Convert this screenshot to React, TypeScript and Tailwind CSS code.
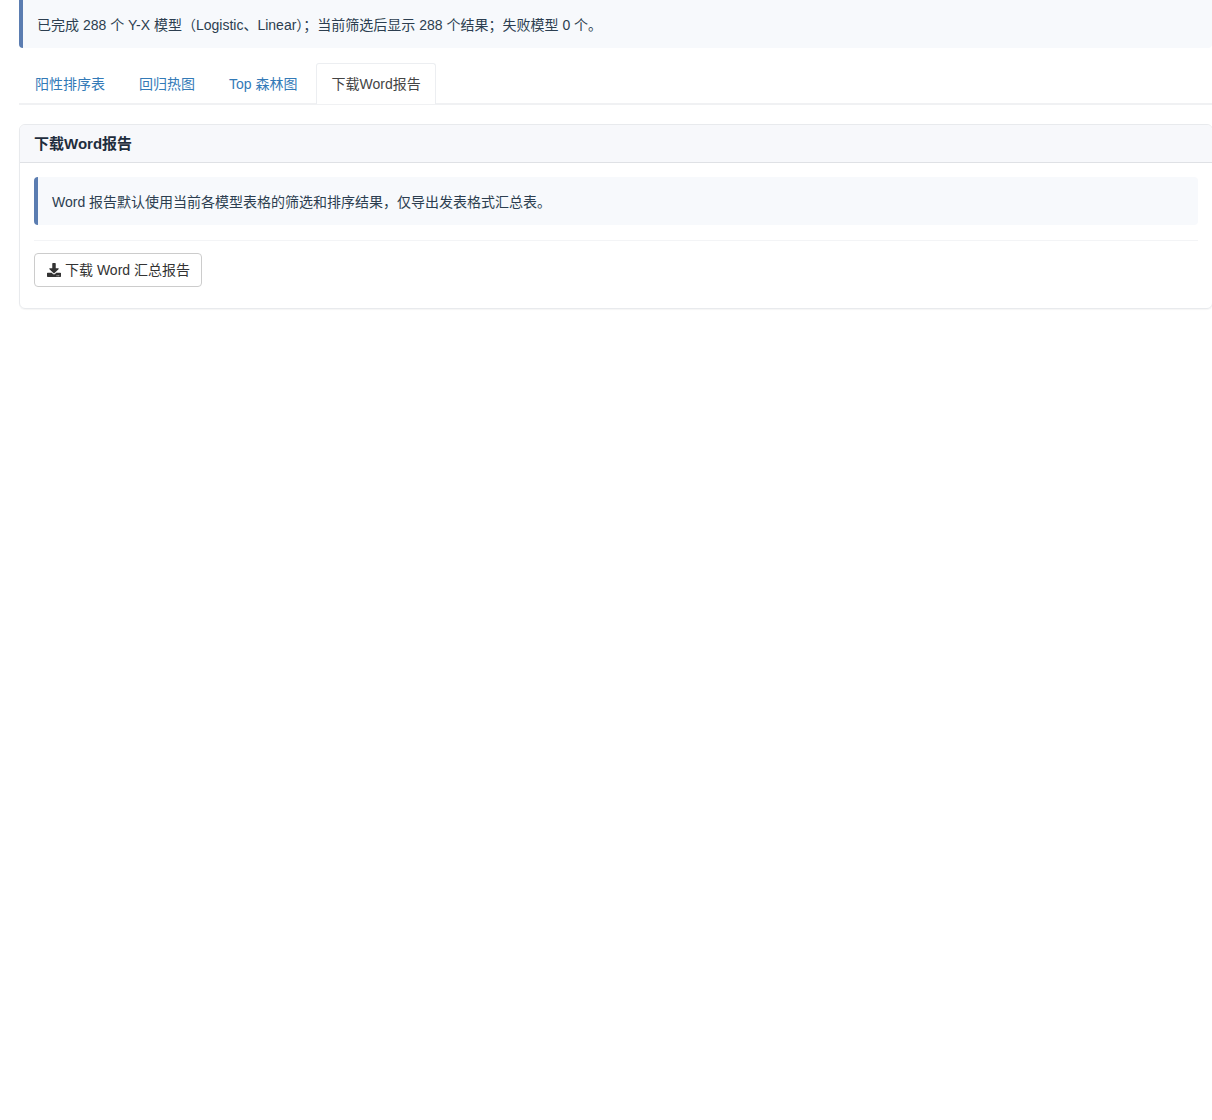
import { FaDownload } from "react-icons/fa";

const tabs = ["阳性排序表", "回归热图", "Top 森林图"];

export default function App() {
  return (
    <div className="min-h-[1120px] overflow-x-hidden bg-white pl-[19px] text-[14px] leading-[20px] text-[#333] font-['Liberation_Sans','Noto_Sans_CJK_SC',sans-serif]">
      <div className="h-[48px] rounded-b-[4px] border-l-[4px] border-[#5b7db1] bg-[#f7f9fc] pl-[14px] pt-[15px] text-[#2c3e50]">
        已完成 288 个 Y-X 模型（Logistic、Linear）；当前筛选后显示 288 个结果；失败模型 0 个。
      </div>

      <div className="mt-[15px] flex h-[42px] border-b-2 border-[#f0f1f3]">
        {tabs.map((tab) => (
          <a key={tab} className="mr-[2px] flex h-[41px] items-center px-[16px] text-[#337ab7]">
            {tab}
          </a>
        ))}
        <a className="relative ml-[1px] flex h-[41px] items-center rounded-t-[3px] border border-b-0 border-[#eceef1] bg-white px-[14px] text-[#444]">
          下载Word报告
        </a>
      </div>

      <div className="mt-[19px] h-[185px] w-[1194px] overflow-hidden rounded-[6px] border border-[#e8eaed] shadow-[0_1px_1px_rgba(0,0,0,0.04)]">
        <div className="flex h-[38px] items-center border-b border-[#dfe1e5] bg-[#f7f8fb] px-[14px] text-[15px] font-bold text-[#1f2d3d]">
          下载Word报告
        </div>
        <div className="px-[14px] pt-[14px]">
          <div className="flex h-[48px] items-center rounded-[4px] border-l-[4px] border-[#5b7db1] bg-[#f7f9fc] pl-[14px] pt-[1px] text-[#2c3e50]">
            Word 报告默认使用当前各模型表格的筛选和排序结果，仅导出发表格式汇总表。
          </div>
          <hr className="mt-[15px] border-t border-[#f3f4f6]" />
          <button className="mt-[12px] flex h-[34px] w-[168px] items-center gap-[4px] rounded-[4px] border border-[#cccccc] bg-white pl-[12px] text-[#333]">
            <FaDownload className="h-[14px] w-[14px]" />
            下载 Word 汇总报告
          </button>
        </div>
      </div>
    </div>
  );
}
